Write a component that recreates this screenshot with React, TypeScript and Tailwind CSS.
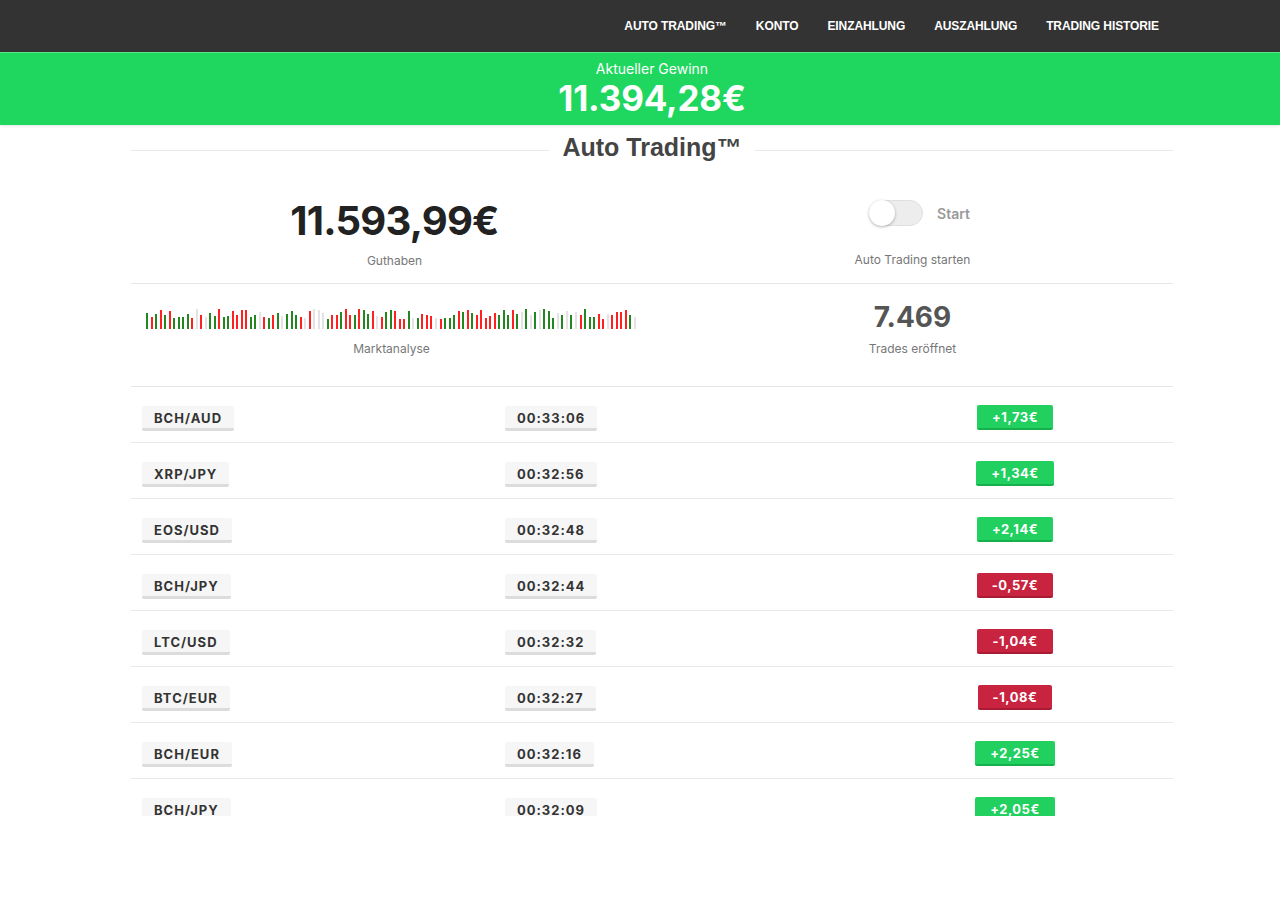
import React from "react";

const navItems = ["AUTO TRADING™", "KONTO", "EINZAHLUNG", "AUSZAHLUNG", "TRADING HISTORIE"];

const trades = [
  { pair: "BCH/AUD", time: "00:33:06", amount: "+1,73€", up: true },
  { pair: "XRP/JPY", time: "00:32:56", amount: "+1,34€", up: true },
  { pair: "EOS/USD", time: "00:32:48", amount: "+2,14€", up: true },
  { pair: "BCH/JPY", time: "00:32:44", amount: "-0,57€", up: false },
  { pair: "LTC/USD", time: "00:32:32", amount: "-1,04€", up: false },
  { pair: "BTC/EUR", time: "00:32:27", amount: "-1,08€", up: false },
  { pair: "BCH/EUR", time: "00:32:16", amount: "+2,25€", up: true },
  { pair: "BCH/JPY", time: "00:32:09", amount: "+2,05€", up: true },
];

// deterministic pseudo random bars
const bars = (() => {
  let seed = 7;
  const rnd = () => {
    seed = (seed * 9301 + 49297) % 233280;
    return seed / 233280;
  };
  const out: { h: number; c: string }[] = [];
  for (let i = 0; i < 109; i++) {
    const r = rnd();
    const c = r < 0.36 ? "bg-[#ff2020]" : r < 0.72 ? "bg-[#23861f]" : "bg-[#e3e3e3]";
    out.push({ h: 10 + Math.round(rnd() * 10), c });
  }
  return out;
})();

const Tag = ({ children }: { children: React.ReactNode }) => (
  <span className="inline-block h-[25px] leading-[24px] px-[12px] bg-[#f6f6f6] border-b-[3px] border-[#dcdcdc] rounded-[2px] text-[13px] font-bold tracking-[1px] text-[#333]">
    {children}
  </span>
);

export default function App() {
  return (
    <div className="min-h-[914px] bg-white font-['Inter','Liberation_Sans',sans-serif]">
      <nav className="h-[52px] bg-[#333333] flex justify-end items-center pr-[121px]">
        <div className="flex items-center gap-[29px] font-['Liberation_Sans',Arial,sans-serif] text-[12px] font-bold text-white">
          {navItems.map((n) => (
            <a key={n} href="#" className="tracking-[-0.1px]">
              {n}
            </a>
          ))}
        </div>
      </nav>

      <div className="h-[73px] bg-[#1fd65f] border-t border-[#5de38a] flex flex-col items-center pl-[24px] text-white shadow-[0_1px_3px_rgba(0,0,0,0.12)]">
        <div className="text-[14px] mt-[7px] leading-[18px]">Aktueller Gewinn</div>
        <div className="text-[35px] font-bold leading-[40px] tracking-[-0.2px]">11.394,28€</div>
      </div>

      <div className="w-[1042px] ml-[131px]">
        <div className="flex items-center mt-[8px] h-[30px]">
          <div className="flex-1 h-px bg-[#e8e8e8] mt-[5px]" />
          <h1 className="px-[13px] font-['Liberation_Sans',Arial,sans-serif] text-[25px] font-bold text-[#444]">
            Auto Trading™
          </h1>
          <div className="flex-1 h-px bg-[#e8e8e8] mt-[5px]" />
        </div>

        <div className="flex h-[121px] border-b border-[#e6e6e6]">
          <div className="w-1/2 flex flex-col items-center pl-[6px]">
            <div className="mt-[34px] text-[40px] font-bold leading-[48px] text-[#222] tracking-[-0.8px]">11.593,99€</div>
            <div className="mt-[7px] text-[12px] text-[#777]">Guthaben</div>
          </div>
          <div className="w-1/2 flex flex-col items-center">
            <div className="mt-[37px] ml-[14px] flex items-center gap-[14px]">
              <div className="w-[54px] h-[26px] rounded-full bg-[#ededed] border border-[#e0e0e0] relative">
                <div className="absolute -left-px -top-px w-[26px] h-[26px] rounded-full bg-white shadow-[0_1px_3px_rgba(0,0,0,0.3)]" />
              </div>
              <span className="text-[14px] font-semibold text-[#9a9a9a]">Start</span>
            </div>
            <div className="mt-[25px] text-[12px] text-[#777]">Auto Trading starten</div>
          </div>
        </div>

        <div className="flex h-[103px] border-b border-[#e6e6e6]">
          <div className="w-1/2 flex flex-col items-center">
            <div className="mt-[24px] w-[491px] h-[21px] flex items-end justify-between">
              {bars.map((b, i) => (
                <div key={i} className={`w-[2px] ${b.c}`} style={{ height: b.h }} />
              ))}
            </div>
            <div className="mt-[11px] text-[12px] text-[#777]">Marktanalyse</div>
          </div>
          <div className="w-1/2 flex flex-col items-center">
            <div className="mt-[16px] text-[28px] font-bold leading-[34px] text-[#555]">7.469</div>
            <div className="mt-[6px] text-[12px] text-[#777]">Trades eröffnet</div>
          </div>
        </div>

        <div className="h-[429px] overflow-hidden">
          {trades.map((t, i) => (
            <div key={i} className="h-[56px] flex items-start pt-[18px] border-b border-[#e8e8e8]">
              <div className="w-[374px] pl-[11px]">
                <Tag>{t.pair}</Tag>
              </div>
              <div className="w-[420px]">
                <Tag>{t.time}</Tag>
              </div>
              <div className="w-[180px] flex justify-center">
                <span
                  className={`inline-block h-[25px] leading-[24px] px-[15px] rounded-[2px] text-[13px] font-bold tracking-[0.5px] text-white border-b-[2px] ${
                    t.up ? "bg-[#21d05e] border-[#18b04d]" : "bg-[#c9243f] border-[#a81c33]"
                  }`}
                >
                  {t.amount}
                </span>
              </div>
            </div>
          ))}
        </div>
      </div>
    </div>
  );
}
